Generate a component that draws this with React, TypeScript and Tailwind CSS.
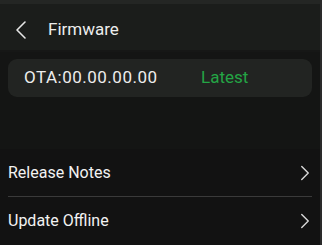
import { ChevronLeft, ChevronRight } from "lucide-react"

const rows = ["Release Notes", "Update Offline"]

export default function App() {
  return (
    <div className="w-[322px] h-[245px] flex bg-[#121212] font-['Roboto',sans-serif] overflow-hidden">
      <div className="flex-1 flex flex-col">
        <div className="h-[4px] bg-[#242624]" />
        <div className="h-[48px] pt-[6px] bg-[#1b1d1b] flex items-center border-b-2 border-[#161716]">
          <ChevronLeft className="w-[32px] h-[32px] ml-[5px] text-[#e6e6e6]" strokeWidth={1.2} />
          <span className="ml-[11px] text-[17px] text-[#ededed]">Firmware</span>
        </div>
        <div className="bg-[#141514] pt-[7px] pb-[52px]">
          <div className="mx-[8px] h-[38px] rounded-[9px] bg-[#222422] flex items-center">
            <span className="ml-[16px] w-[177px] text-[17px] tracking-[0.5px] text-[#ededed]">OTA:00.00.00.00</span>
            <span className="text-[17px] text-[#24a545]">Latest</span>
          </div>
        </div>
        <div className="flex-1 px-[8px] bg-[#121212]">
          {rows.map((r, i) => (
            <div
              key={r}
              className={`h-[48px] flex items-center justify-between ${i === 0 ? "border-b border-[#3a3a3a]" : ""}`}
            >
              <span className="text-[16px] text-[#f2f2f2]">{r}</span>
              <ChevronRight className="w-[26px] h-[26px] text-[#d8d8d8] -mr-[6px]" strokeWidth={1.3} />
            </div>
          ))}
        </div>
      </div>
      <div className="w-[2px] bg-[#2a2a2a]" />
    </div>
  )
}
